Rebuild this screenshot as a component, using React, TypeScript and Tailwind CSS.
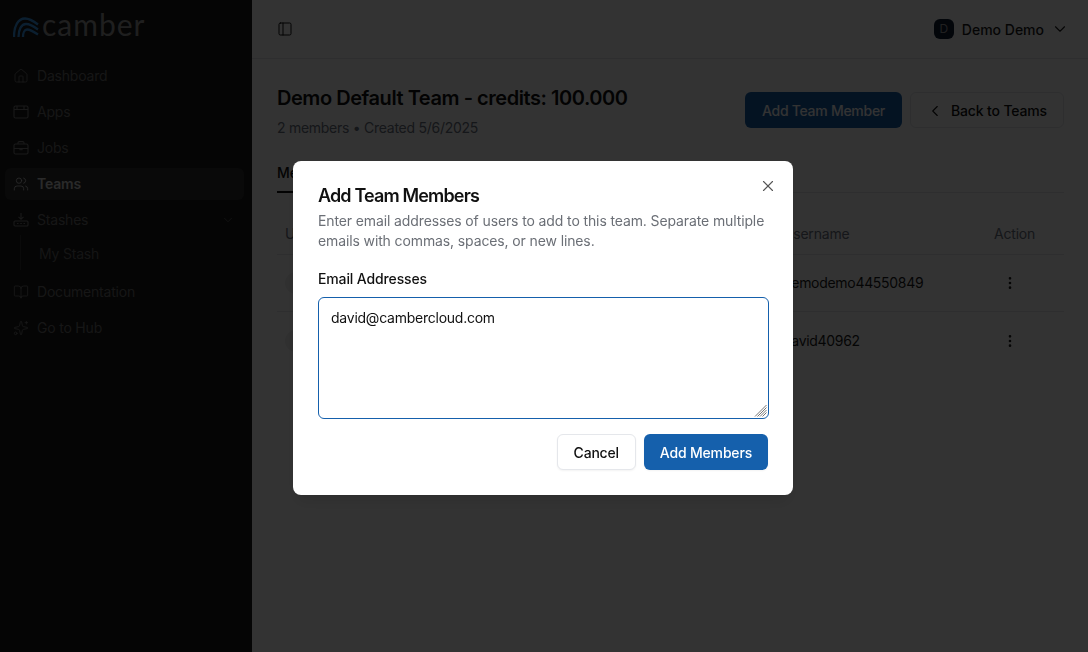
import {
  BookOpen,
  ChevronDown,
  ChevronLeft,
  House,
  MoreVertical,
  PanelLeft,
  Sparkles,
  Users,
  X,
} from "lucide-react";

function AppsIcon() {
  return (
    <svg width="16" height="16" viewBox="0 0 16 16" fill="none" stroke="currentColor" strokeWidth="1.1">
      <rect x="1" y="2" width="14" height="12" rx="1.5" />
      <path d="M1 5.500h14M4 2v3.500M11 2v3.500" />
    </svg>
  );
}

function JobsIcon() {
  return (
    <svg width="16" height="16" viewBox="0 0 16 16" fill="none" stroke="currentColor" strokeWidth="1.1">
      <rect x="1" y="4" width="14" height="10" rx="1.500" />
      <path d="M5 4V2.800C5 2.100 5.500 1.600 6.200 1.600h3.600c.7 0 1.200.5 1.200 1.200V4M1 8.500h14M7 8.500v1.200h2V8.500" />
    </svg>
  );
}

function StashIcon() {
  return (
    <svg width="16" height="16" viewBox="0 0 16 16" fill="none" stroke="currentColor" strokeWidth="1.1">
      <path d="M8 1v6M5.500 4.800 8 7.300l2.500-2.500" />
      <rect x="1" y="9" width="14" height="5" rx="1" />
      <path d="M4 11.500h1.500M7.300 11.500h1.500M10.500 11.500H12" />
    </svg>
  );
}

function Logo() {
  return (
    <div className="flex h-[52px] items-center pl-[13px]">
      <svg width="26" height="20" viewBox="0 0 26 20" fill="none" stroke="#3b9cf0" strokeWidth="2.300" className="mt-[1px]">
        <path d="M1 20C1 9 5 1.500 12 1.500c4.500 0 8.500 2.500 13 6" />
        <path d="M5.500 20C5.500 12.500 8.500 7 13 7c4 0 8 2.500 12 5.500" />
        <path d="M10 20c0-4 1.500-7.500 4-7.500 3 0 6.500 2 11 5" />
      </svg>
      <span className="-mt-1 ml-[3px] text-[30px] leading-none tracking-[1px] text-[#9a9a9a] font-['Lato',sans-serif]">camber</span>
    </div>
  );
}

function NavItem({ icon, label, active }: { icon: React.ReactNode; label: string; active?: boolean }) {
  return (
    <div
      className={`flex h-8 items-center gap-2 rounded-md pl-2 text-sm tracking-[-0.2px] ${
        active ? "bg-[#2f2f2f] font-semibold text-[#cfcfcf]" : "text-[#6e6e6e]"
      }`}
    >
      <span className={`flex w-4 justify-center ${active ? "text-[#cfcfcf]" : "text-[#7d7d7d]"}`}>{icon}</span>
      {label}
    </div>
  );
}

function Sidebar() {
  return (
    <aside className="w-[252px] shrink-0 bg-[#191919]">
      <Logo />
      <nav className="mt-2 flex flex-col gap-1 pl-[5px] pr-2">
        <NavItem icon={<House size={16} strokeWidth={1.25} />} label="Dashboard" />
        <NavItem icon={<AppsIcon />} label="Apps" />
        <NavItem icon={<JobsIcon />} label="Jobs" />
        <NavItem icon={<Users size={16} strokeWidth={1.25} />} label="Teams" active />
        <div className="relative">
          <NavItem icon={<StashIcon />} label="Stashes" />
          <ChevronDown size={14} strokeWidth={1.25} className="absolute right-[9px] top-[9px] text-[#6e6e6e]" />
        </div>
        <div className="-mt-[5px] mb-[2px] ml-[15px] flex h-[35px] items-center border-l border-[#333] pl-[18px] pt-[3px] text-sm tracking-[-0.2px] text-[#666]">
          My Stash
        </div>
        <NavItem icon={<BookOpen size={16} strokeWidth={1.25} />} label="Documentation" />
        <NavItem icon={<Sparkles size={16} strokeWidth={1.25} />} label="Go to Hub" />
      </nav>
    </aside>
  );
}

const members = [
  { name: "Demo Demo", username: "demodemo44550849" },
  { name: "David", username: "david40962" },
];

function Main() {
  return (
    <main className="flex min-w-0 flex-1 flex-col bg-white">
      <header className="flex h-[59px] items-center justify-between border-b border-[#e5e7eb] pl-[25px] pr-[19px]">
        <PanelLeft size={16} strokeWidth={1.5} className="text-[#111]" />
        <div className="flex items-center gap-2 text-sm font-medium text-[#1c1c1c]">
          <span className="flex h-5 w-5 items-center justify-center rounded-md bg-[#0f1e36] text-xs font-normal text-[#a0a0a0]">
            D
          </span>
          <span className="pt-px">Demo Demo</span>
          <ChevronDown size={18} strokeWidth={1.5} className="-ml-px" />
        </div>
      </header>

      <div className="px-[25px] pr-6">
        <div className="flex items-start justify-between pt-[25px]">
          <div>
            <h1 className="text-xl font-semibold leading-7 tracking-[-0.45px] text-[#111]">Demo Default Team - credits: 100.000</h1>
            <p className="mt-[6px] text-sm leading-5 tracking-[-0.27px] text-[#6b7280]">2 members • Created 5/6/2025</p>
          </div>
          <div className="mt-2 flex gap-2">
            <button className="h-9 rounded-md bg-[#1560ac] px-[17px] pt-px text-sm font-medium tracking-[-0.27px] text-white">Add Team Member</button>
            <button className="flex h-9 items-center gap-2 rounded-md border border-[#e5e7eb] bg-white px-4 pt-px text-sm font-medium tracking-[-0.15px] text-[#111]">
              <ChevronLeft size={18} strokeWidth={1.5} className="-mx-px" />
              Back to Teams
            </button>
          </div>
        </div>

        <div className="mt-[21px] flex h-[34px] border-b border-[#e5e7eb]">
          <div className="h-[34px] w-[70px] border-b-2 border-[#111] pt-[4px] text-sm font-medium text-[#111]">Members</div>
        </div>

        <div className="mt-[21px] text-sm tracking-[-0.2px]">
          <div className="grid h-[41px] grid-cols-[498px_211px_1fr] items-center border-b border-[#e5e7eb] pb-[1px] pl-2 text-[#6b7280]">
            <span>User</span>
            <span>Username</span>
            <span>Action</span>
          </div>
          {members.map((m) => (
            <div key={m.username} className="grid h-[57px] grid-cols-[498px_211px_1fr] items-center border-b border-[#e5e7eb] pl-2 tracking-[-0.3px] text-[#1c1c1c] last:border-b-0">
              <span aria-label={m.name} className="h-[22px] w-[22px] rounded-full bg-[#f0f0f0]" />
              <span>{m.username}</span>
              <span className="pl-2">
                <MoreVertical size={16} strokeWidth={2} />
              </span>
            </div>
          ))}
        </div>
      </div>
    </main>
  );
}

function AddMembersDialog() {
  return (
    <div className="fixed inset-0 bg-black/80 pl-[293px] pt-[161px]">
      <div className="relative h-[334px] w-[500px] rounded-lg bg-white p-[25px] shadow-lg">
        <button className="absolute right-4 top-4 text-[#555]">
          <X size={18} strokeWidth={1.5} />
        </button>
        <h2 className="text-lg font-semibold leading-5 tracking-[-0.85px] text-[#111]">Add Team Members</h2>
        <p className="mt-[5px] text-sm leading-5 tracking-[-0.12px] text-[#6b6f76]">
          Enter email addresses of users to add to this team. Separate multiple emails with commas, spaces, or new lines.
        </p>
        <label className="mt-[18px] block text-sm font-medium leading-5 tracking-[-0.13px] text-[#111]">Email Addresses</label>
        <div className="relative mt-2">
          <textarea
            readOnly
            value="david@cambercloud.com"
            className="block h-[122px] w-[451px] resize-none rounded-md border border-[#1560ac] px-3 py-[10px] text-sm leading-5 tracking-[-0.24px] text-[#111] outline-none"
          />
          {/* native grip looks different here, so it is drawn over the corner */}
          <svg width="13" height="13" viewBox="0 0 13 13" stroke="#777" strokeWidth="1" className="absolute bottom-[2px] right-[1px]">
            <path d="M12.500 1 1 12.500M12.500 3.500 3.500 12.500M12.500 6 6 12.500M12.500 8.500 8.500 12.500" />
          </svg>
        </div>
        <div className="mt-[15px] flex justify-end gap-2">
          <button className="h-9 rounded-md border border-[#e5e7eb] bg-white px-4 pt-px text-sm font-medium tracking-[-0.2px] text-[#111] shadow-xs">
            Cancel
          </button>
          <button className="h-9 rounded-md bg-[#1560ac] px-4 pt-px text-sm font-medium tracking-[-0.18px] text-white shadow-xs">Add Members</button>
        </div>
      </div>
    </div>
  );
}

export default function App() {
  return (
    <div className="flex h-[652px] w-[1088px] overflow-hidden font-['Inter',sans-serif]">
      <Sidebar />
      <Main />
      <AddMembersDialog />
    </div>
  );
}
